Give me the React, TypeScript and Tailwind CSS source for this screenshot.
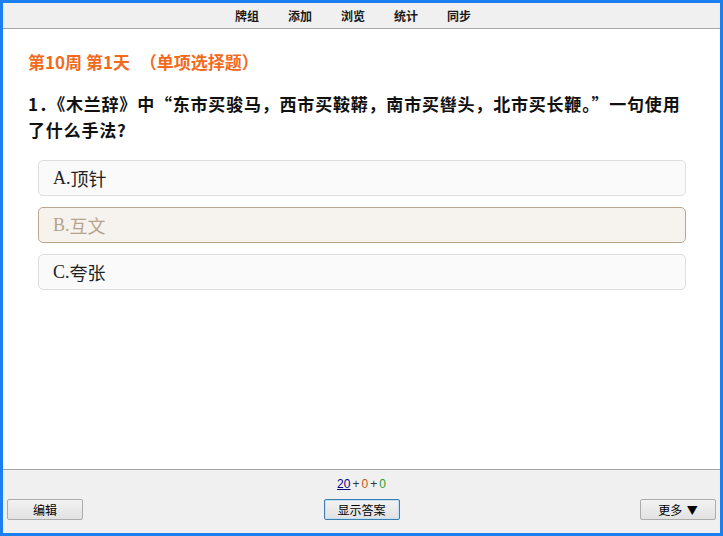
import React from "react";

const cjk = "font-['Noto_Sans_CJK_SC','Noto_Sans',sans-serif]";

const menu = ["牌组", "添加", "浏览", "统计", "同步"];

type Opt = { label: string; text: string; picked?: boolean };

const options: Opt[] = [
  { label: "A.", text: "顶针" },
  { label: "B.", text: "互文", picked: true },
  { label: "C.", text: "夸张" },
];

function WinButton({
  children,
  focused,
}: {
  children: React.ReactNode;
  focused?: boolean;
}) {
  return (
    <button
      type="button"
      className={[
        "h-[21px] w-[76px] rounded-[2px] border text-[12px] leading-none text-black",
        "bg-gradient-to-b from-[#f2f2f2] to-[#e2e2e2]",
        focused ? "border-[#3c7fb1] shadow-[inset_0_0_0_1px_#bfe0f5]" : "border-[#acacac]",
        cjk,
      ].join(" ")}
    >
      {children}
    </button>
  );
}

export default function App() {
  return (
    <div className="w-[723px] h-[536px] border-[3px] border-[#1b7ff2] bg-white flex flex-col overflow-hidden">
      {/* top menu */}
      <header className="h-[26px] shrink-0 bg-[#f0f0f0] border-b border-[#a6a6a6] flex items-center pl-[232px] gap-[29px]">
        {menu.map((m) => (
          <span key={m} className={`text-[12px] font-bold text-[#1a1a1a] leading-none ${cjk}`}>
            {m}
          </span>
        ))}
      </header>

      {/* card */}
      <main className="flex-1 px-[25px] pt-[21px]">
        <h2 className={`text-[17px] leading-[24px] font-bold text-[#f26a1b] ${cjk}`}>
          第10周 第1天 <span className="ml-[6px]">（单项选择题）</span>
        </h2>
        <p className={`mt-[17px] text-[17px] leading-[26px] font-bold tracking-[0.8px] text-[#111] ${cjk}`}>
          1．《木兰辞》中“东市买骏马，西市买鞍鞯，南市买辔头，北市买长鞭。”一句使用了什么手法?
        </p>

        <div className="mt-[17px] ml-[10px] mr-[9px] flex flex-col gap-[11px]">
          {options.map((o) => (
            <div
              key={o.label}
              className={[
                "h-[36px] rounded-[5px] border flex items-center pl-[14px] text-[18px]",
                o.picked
                  ? "border-[#bba68c] bg-[#f6f3ee] text-[#b5a38f]"
                  : "border-[#dedede] bg-[#fafafa] text-[#222]",
              ].join(" ")}
            >
              <span className="font-['Liberation_Serif',serif]">{o.label}</span>
              <span className={cjk}>{o.text}</span>
            </div>
          ))}
        </div>
      </main>

      {/* bottom bar */}
      <footer className="h-[64px] shrink-0 bg-[#f0f0f0] border-t border-[#a6a6a6] flex flex-col">
        <div className="h-[28px] flex items-center justify-center text-[12px] font-['Liberation_Sans',sans-serif]">
          <span className="text-[#00007f] underline">20</span>
          <span className="text-[#333] px-[2px]">+</span>
          <span className="text-[#c35617]">0</span>
          <span className="text-[#333] px-[2px]">+</span>
          <span className="text-[#1fa31f]">0</span>
        </div>
        <div className="flex items-center justify-between px-[4px] pt-[1px]">
          <WinButton>编辑</WinButton>
          <WinButton focused>显示答案</WinButton>
          <WinButton>
            更多 <span className="text-[11px] ml-[2px]">▼</span>
          </WinButton>
        </div>
      </footer>
    </div>
  );
}
